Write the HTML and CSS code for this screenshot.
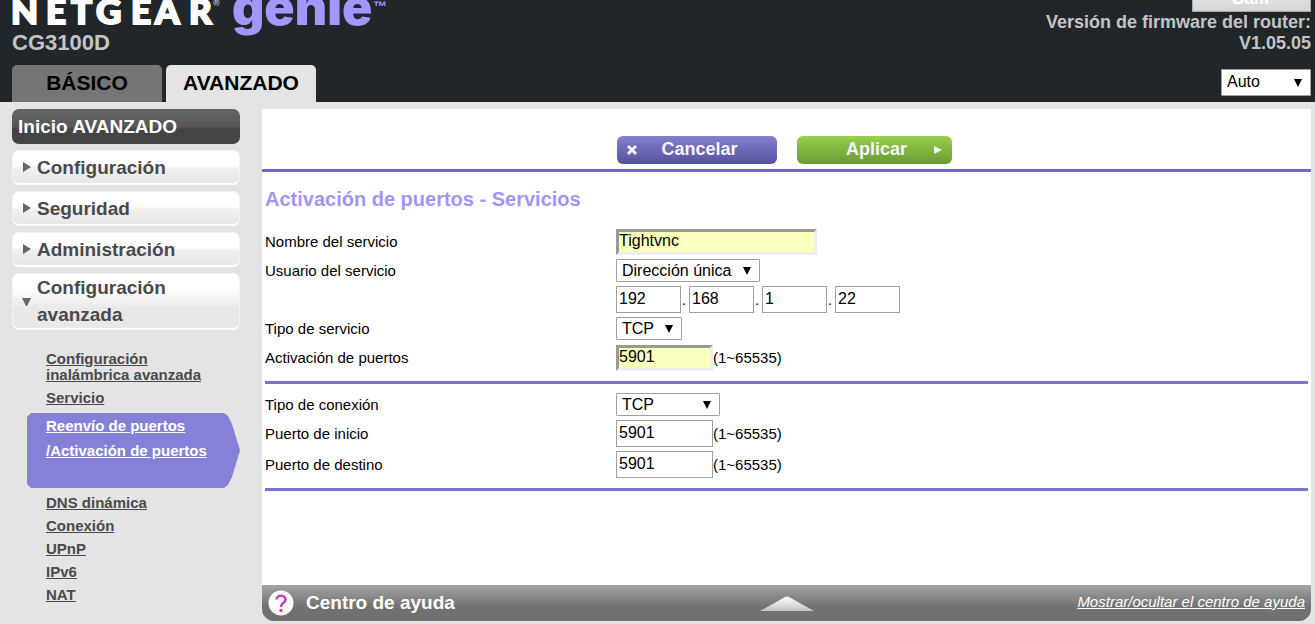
FILE: index.html
```html
<!DOCTYPE html>
<html lang="es">
<head>
<meta charset="utf-8">
<title>NETGEAR genie CG3100D</title>
<link rel="stylesheet" href="styles.css">
</head>
<body>
<header class="top">
  <div class="brand">
    <svg class="logo" width="390" height="36" viewBox="0 0 390 36" role="img" aria-label="NETGEAR genie">
      <text class="logo-netgear" y="24" x="-1 34 59 84 119 143 177">NETGEAR</text>
      <text class="logo-mark" x="201" y="6">®</text>
      <text class="logo-genie" x="220" y="25">genie</text>
      <text class="logo-tm" x="361" y="11">™</text>
    </svg>
    <div class="model">CG3100D</div>
    <nav class="tabs">
      <a class="tab" href="#basico">BÁSICO</a>
      <a class="tab tab-active" href="#avanzado">AVANZADO</a>
    </nav>
  </div>
  <div class="session">
    <button class="logout" type="button">Salir</button>
    <div class="firmware">Versión de firmware del router:<br>V1.05.05</div>
    <select class="select language" aria-label="Idioma"><option>Auto</option></select>
  </div>
</header>
<div class="body">
  <nav class="side">
    <a class="menu menu-home" href="#inicio">Inicio AVANZADO</a>
    <a class="menu" href="#configuracion"><svg class="arrow" viewBox="0 0 10 12"><path d="M1 1L9 6L1 11Z"/></svg>Configuración</a>
    <a class="menu" href="#seguridad"><svg class="arrow" viewBox="0 0 10 12"><path d="M1 1L9 6L1 11Z"/></svg>Seguridad</a>
    <a class="menu" href="#administracion"><svg class="arrow" viewBox="0 0 10 12"><path d="M1 1L9 6L1 11Z"/></svg>Administración</a>
    <a class="menu menu-tall" href="#avanzada"><svg class="arrow" viewBox="0 0 10 12"><path d="M0 3H9L5 11H4Z"/></svg>Configuración avanzada</a>
    <ul class="sub">
      <li class="sub-first"><a href="#wifi">Configuración<br>inalámbrica avanzada</a></li>
      <li><a href="#servicio">Servicio</a></li>
      <li class="sub-current"><a href="#puertos">Reenvío de puertos<br>/Activación de puertos</a></li>
      <li><a href="#dns">DNS dinámica</a></li>
      <li><a href="#conexion">Conexión</a></li>
      <li><a href="#upnp">UPnP</a></li>
      <li><a href="#ipv6">IPv6</a></li>
      <li><a href="#nat">NAT</a></li>
    </ul>
  </nav>
  <main class="main">
    <form class="form">
      <div class="actions">
        <button class="btn btn-cancel" type="button"><svg class="icon" viewBox="0 0 12 12"><path d="M2 2L10 10M10 2L2 10" fill="none" stroke="#f4f4fa" stroke-width="3"/></svg><span>Cancelar</span></button>
        <button class="btn btn-apply" type="button"><span>Aplicar</span><svg class="icon" viewBox="0 0 12 12"><path d="M2 2L10 6L2 10Z" fill="#f2f8e8"/></svg></button>
      </div>
      <div class="content">
        <h1 class="title">Activación de puertos - Servicios</h1>
        <div class="group">
          <label for="name">Nombre del servicio</label>
          <div class="field"><input class="text text-filled name" id="name" value="Tightvnc"></div>
          <label for="user">Usuario del servicio</label>
          <div class="field"><select class="select user" id="user"><option>Dirección única</option></select></div>
          <div class="field field-ip">
            <input class="text octet" aria-label="IP 1" value="192"><span class="dot">.</span><input class="text octet" aria-label="IP 2" value="168"><span class="dot">.</span><input class="text octet" aria-label="IP 3" value="1"><span class="dot">.</span><input class="text octet" aria-label="IP 4" value="22">
          </div>
          <label for="type">Tipo de servicio</label>
          <div class="field"><select class="select type" id="type"><option>TCP</option></select></div>
          <label for="trigger">Activación de puertos</label>
          <div class="field"><input class="text text-filled port" id="trigger" value="5901"><span>(1~65535)</span></div>
        </div>
        <div class="group group-link">
          <label for="conn">Tipo de conexión</label>
          <div class="field"><select class="select conn" id="conn"><option>TCP</option></select></div>
          <label for="start">Puerto de inicio</label>
          <div class="field"><input class="text port" id="start" value="5901"><span>(1~65535)</span></div>
          <label for="end">Puerto de destino</label>
          <div class="field"><input class="text port" id="end" value="5901"><span>(1~65535)</span></div>
        </div>
      </div>
    </form>
    <footer class="help">
      <div class="help-title">
        <svg class="help-icon" viewBox="0 0 26 26"><circle cx="13" cy="13" r="12.5" fill="#fff"/><path d="M8.500 9.500C8.500 4.500 17.500 4.500 17.500 9.500C17.500 13 13 12.500 13 17" fill="none" stroke="#c83cc8" stroke-width="2.600"/><circle cx="13" cy="20.500" r="1.700" fill="#c83cc8"/></svg>
        <span>Centro de ayuda</span>
      </div>
      <svg class="help-up" viewBox="0 0 54 15"><defs><linearGradient id="up" x1="0" y1="0" x2="0" y2="1"><stop offset="0" stop-color="#fff"/><stop offset="1" stop-color="#c4c4c4"/></linearGradient></defs><path d="M0 15L25 1Q27 0 29 1L54 15Z" fill="url(#up)"/></svg>
      <a class="help-link" href="#ayuda">Mostrar/ocultar el centro de ayuda</a>
    </footer>
  </main>
</div>
</body>
</html>
```
FILE: styles.css
```css
* { box-sizing: border-box; }
body {
  margin: 0;
  min-height: 100vh;
  display: flex;
  flex-direction: column;
  background: #e4e4e4;
  font-family: "Liberation Sans", Arial, sans-serif;
  font-size: 15px;
  color: #000;
}
.top {
  display: flex;
  justify-content: space-between;
  padding: 0 4px 0 12px;
  background: #21262a;
  overflow: hidden;
}
.brand { display: flex; flex-direction: column; }
.logo { display: block; flex: none; }
.logo-netgear { font: 900 35px Lato, sans-serif; fill: #fff; stroke: #fff; stroke-width: 2px; }
.logo-mark { font: bold 9px "Liberation Sans", sans-serif; fill: #ccc; }
.logo-genie { font: 900 50px Inter, sans-serif; fill: #a397ff; }
.logo-tm { font: bold 14px "Liberation Sans", sans-serif; fill: #a397ff; }
.model {
  height: 29px;
  font-size: 22px;
  line-height: 14px;
  font-weight: bold;
  color: #c4c4c4;
}
.tabs { display: flex; gap: 4px; }
.tab {
  width: 150px;
  height: 37px;
  border-radius: 5px 5px 0 0;
  background: #757575;
  font-size: 21px;
  line-height: 36px;
  font-weight: bold;
  text-align: center;
  text-decoration: none;
  color: #000;
}
.tab-active { background: #e4e4e4; }
.session {
  display: flex;
  flex-direction: column;
  align-items: flex-end;
}
.logout {
  flex: none;
  width: 119px;
  height: 28px;
  margin-top: -16px;
  padding: 0;
  border: 1px solid #aaa;
  background: linear-gradient(#f0f0f0, #d4d4d4);
  font: bold 18px "Liberation Sans", Arial, sans-serif;
  color: #fff;
}
.firmware {
  height: 57px;
  font-size: 18px;
  line-height: 21px;
  font-weight: bold;
  text-align: right;
  color: #c4c4c4;
}
.select {
  appearance: none;
  height: 23px;
  margin: 0;
  padding: 0 5px;
  border: 1px solid #a0a0a0;
  border-radius: 1px;
  background: #fff url("data:image/svg+xml,%3Csvg xmlns='http://www.w3.org/2000/svg' width='8' height='8'%3E%3Cpath d='M0 0H8L4 8Z'/%3E%3C/svg%3E") no-repeat right 8px center;
  font: 16px "Liberation Sans", Arial, sans-serif;
  color: #000;
}
.language { width: 90px; height: 27px; padding-bottom: 2px; }
.user { width: 144px; }
.type { width: 66px; }
.conn { width: 104px; }
.body {
  flex: 1;
  display: flex;
  gap: 22px;
  padding: 7px 4px 3px 12px;
}
.side {
  flex: none;
  width: 228px;
  display: flex;
  flex-direction: column;
  gap: 6px;
}
.menu {
  display: flex;
  align-items: center;
  gap: 5px;
  min-height: 35px;
  padding: 0 6px 0 9px;
  border: 1px solid #f4f4f4;
  border-bottom: 2px solid #fff;
  border-radius: 7px;
  background: linear-gradient(#fff 45%, #f0f0f0 55%, #e8e8e8);
  font-size: 19px;
  line-height: 27px;
  font-weight: bold;
  text-decoration: none;
  color: #4a4a4a;
}
.menu-home {
  padding: 0 6px;
  border: 0;
  background: linear-gradient(#646464, #585858 50%, #444 58%, #444);
  color: #fff;
}
.menu-tall {
  background: linear-gradient(#fff 25%, #e8e8e8 65%);
}
.arrow { flex: none; width: 10px; height: 12px; fill: #666; }
.sub {
  margin: 12px 0 0;
  padding: 0;
  list-style: none;
  font-weight: bold;
  line-height: 23px;
}
.sub li { padding-left: 34px; }
.sub a { color: #4a4a4a; }
.sub .sub-first { padding-top: 3px; padding-bottom: 3px; line-height: 16px; }
.sub .sub-current {
  min-height: 75px;
  margin: 4px 0 3px 15px;
  padding-left: 19px;
  background: #8680d8;
  line-height: 25px;
  clip-path: polygon(0 4px, 4px 0, calc(100% - 16px) 0, calc(100% - 12px) 3px, calc(100% - 8px) 11px, 100% 50%, calc(100% - 8px) calc(100% - 11px), calc(100% - 12px) calc(100% - 3px), calc(100% - 16px) 100%, 4px 100%, 0 calc(100% - 4px));
}
.sub .sub-current a { color: #fff; }
.main {
  flex: 1;
  display: flex;
  flex-direction: column;
}
.form { flex: 1; background: #fff; }
.actions {
  display: flex;
  justify-content: center;
  gap: 20px;
  padding: 27px 4px 5px 0;
  border-bottom: 3px solid #7168cc;
}
.btn {
  display: flex;
  align-items: center;
  height: 28px;
  border: 0;
  border-radius: 6px;
  font: bold 18px/26px "Liberation Sans", Arial, sans-serif;
  color: #f4f4fa;
}
.btn span { flex: 1; height: 28px; }
.btn-cancel {
  width: 160px;
  padding: 0 16px 0 9px;
  background: linear-gradient(#8580ce, #56519c);
}
.btn-apply {
  width: 155px;
  padding: 0 8px 0 24px;
  background: linear-gradient(#97cf4c, #6c9a34);
}
.icon { width: 12px; height: 12px; }
.content { padding: 15px 3px 0; }
.title {
  margin: 0 0 16px;
  font-size: 20px;
  line-height: 24px;
  color: #a196f6;
}
.group {
  display: grid;
  grid-template-columns: 351px 1fr;
  grid-auto-rows: 29px;
  align-items: center;
  padding-bottom: 9px;
  border-bottom: 3px solid #7a74d0;
}
.group-link { grid-template-rows: 27px 31px 31px; padding: 7px 0 8px; }
.field { display: flex; align-items: center; }
.field-ip { grid-column: 2; }
.text {
  height: 27px;
  margin: 0;
  padding: 0 2px 2px;
  border: 1px solid #a0a0a0;
  font: 16px "Liberation Sans", Arial, sans-serif;
  color: #000;
}
.text-filled {
  height: 26px;
  padding: 0 0 2px;
  border: 3px solid;
  border-color: #9a9a92 #eee #eee #9a9a92;
  background: #faffbd;
}
.name { width: 201px; }
.port { width: 97px; }
.octet { width: 65px; }
.dot { width: 8px; padding-left: 1px; line-height: 20px; }
.help {
  display: grid;
  grid-template-columns: 1fr auto 1fr;
  align-items: center;
  height: 36px;
  padding: 0 6px;
  border-radius: 0 0 12px 12px;
  background: linear-gradient(#a4a4a4, #727272 60%, #707070);
}
.help-title {
  display: flex;
  align-items: center;
  gap: 12px;
  font-size: 19px;
  font-weight: bold;
  color: #fff;
}
.help-icon { width: 26px; height: 26px; }
.help-up { width: 54px; height: 15px; }
.help-link {
  justify-self: end;
  padding-bottom: 4px;
  font-style: italic;
  color: #fff;
}
```
